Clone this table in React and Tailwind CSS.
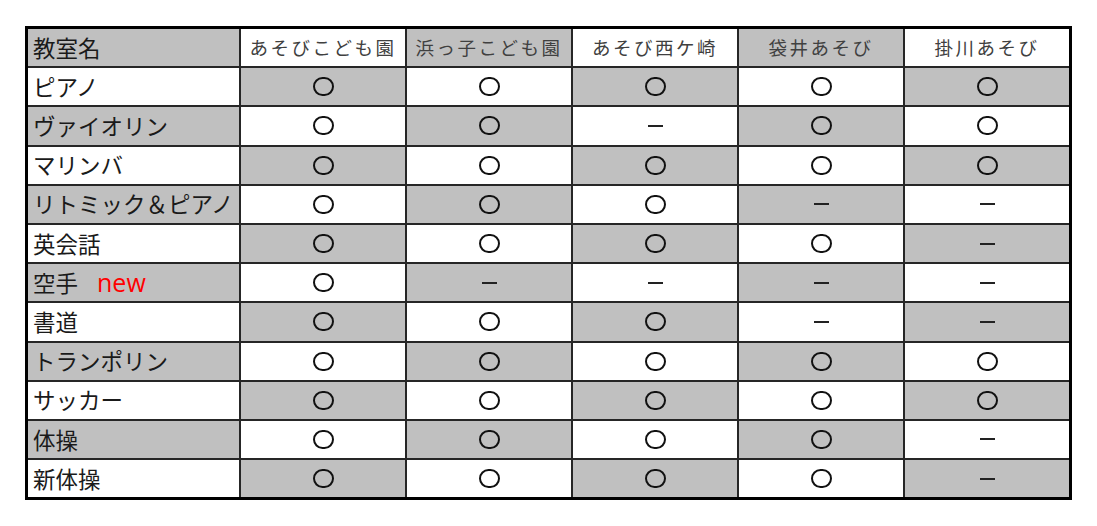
import React from 'react'

const jp = { fontFamily: '"Noto Sans CJK JP", "Noto Sans", sans-serif' }

const schools = ['あそびこども園', '浜っ子こども園', 'あそび西ケ崎', '袋井あそび', '掛川あそび']

// o = circle, x = dash
const lessons = [
  ['ピアノ', 'ooooo'],
  ['ヴァイオリン', 'ooxoo'],
  ['マリンバ', 'ooooo'],
  ['リトミック＆ピアノ', 'oooxx'],
  ['英会話', 'oooox'],
  ['空手', 'oxxxx', true],
  ['書道', 'oooxx'],
  ['トランポリン', 'ooooo'],
  ['サッカー', 'ooooo'],
  ['体操', 'oooox'],
  ['新体操', 'oooox'],
]

function Cell({ gray, className = '', children }) {
  return (
    <div className={`h-[37.2px] flex items-center ${gray ? 'bg-[#c0c0c0]' : 'bg-white'} ${className}`}>
      {children}
    </div>
  )
}

function Mark({ v }) {
  if (v === 'o') {
    return <div className="w-[21px] h-[19px] rounded-full border-[2.5px] border-[#111]" />
  }
  return <div className="w-[15px] h-[2px] bg-[#222]" />
}

export default function App() {
  return (
    <div className="min-h-screen bg-white pt-[26px] pl-[25px]" style={jp}>
      <div className="inline-grid grid-cols-[211px_repeat(5,164px)] gap-[2px] bg-[#262626] border-[3px] border-black">
        {/* header */}
        <Cell gray className="pl-[5px] text-[22.5px] text-[#1a1a1a]">教室名</Cell>
        {schools.map((s, i) => (
          <Cell key={s} gray={(i + 1) % 2 === 0} className="justify-center text-[18.5px] tracking-[2.5px] text-[#404040]">
            {s}
          </Cell>
        ))}

        {lessons.map(([name, marks, isNew], r) => (
          <React.Fragment key={name}>
            <Cell gray={(r + 1) % 2 === 0} className="pl-[5px] text-[22.5px] text-[#1a1a1a] whitespace-nowrap">
              {name}
              {isNew && (
                <span className="ml-[19px] text-[25px] text-[#ff0000]" style={{ fontFamily: '"Open Sans", "Noto Sans", sans-serif' }}>
                  new
                </span>
              )}
            </Cell>
            {marks.split('').map((m, c) => (
              <Cell key={c} gray={(r + 1 + c + 1) % 2 === 0} className="justify-center">
                <Mark v={m} />
              </Cell>
            ))}
          </React.Fragment>
        ))}
      </div>
    </div>
  )
}
